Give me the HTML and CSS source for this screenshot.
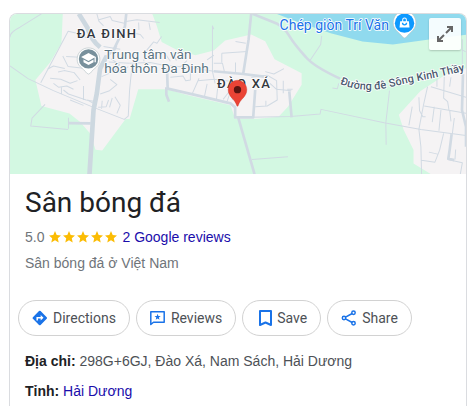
FILE: index.html
```html
<!DOCTYPE html>
<html lang="vi">
<head>
    <meta charset="UTF-8">
    <meta name="viewport" content="width=device-width, initial-scale=1.0">
    <title>Sân bóng đá</title>
    <link rel="stylesheet" href="styles.css">
</head>
<body>
    <main class="card">
        <div class="map">
            <svg class="map-canvas" viewBox="30 42 1365 480" preserveAspectRatio="xMidYMid slice" role="img" aria-label="Map">
                <rect class="land" x="20" y="30" width="1390" height="500"/>
                <!-- built-up areas -->
                <path class="town" d="M188 42H456L470 80L484 126L530 150L585 166L640 152L674 122L752 104L794 124L822 178L903 220V254L862 320L834 350L770 356H704L690 316L560 285L500 268H414L388 357H376L306 451L286 449L270 400L240 366L208 340L124 318L106 240L150 188L184 130Z"/>
                <path class="town" d="M1395 205L1340 220L1258 274L1194 344L1208 388L1238 450V490L1290 522H1395Z"/>
                <path class="water" d="M828 42H1395V105L1290 118L1176 134L1085 125L990 100L890 66Z"/>
                <!-- small roads -->
                <g class="lane">
                    <path d="M124 42L60 82Q30 96 30 112M30 198L84 236L160 272L280 322L372 358L384 348L388 270L396 190"/>
                    <path d="M135 313L96 354L92 378L204 388M205 353V386M122 248L204 94L230 100L262 115M194 206L160 198L142 208M174 216L192 212L222 218L240 240M150 235L182 238L210 250L232 242M198 170L240 172M160 250L176 262L200 258L220 268"/>
                    <path d="M188 168L204 200L250 205M190 270L205 282L258 300L280 304M184 262V282M296 60L330 50L336 62L372 70M290 42L296 64L310 78M372 66L410 60L478 68M415 68L416 90M446 68L450 90M380 96L420 104L430 116M322 150L340 160L350 138M310 140L360 148"/>
                    <path d="M304 230L340 215L358 194L332 176M330 205L360 218L384 200M300 282L328 272L350 254L330 238M294 322L318 320L325 300M306 302L304 326M328 322L336 294M344 290L360 316L350 340M326 186L388 190M250 258V300M262 300L280 310M210 300L250 316"/>
                    <path d="M388 190L450 188L490 196L560 202L640 214M430 184L440 150L460 126L470 130L484 110M470 160L492 158L510 184M510 232L548 228L556 242L570 240V208M528 182L520 160M540 200L560 182M576 280L596 235M612 290L620 252M592 242L640 238L690 244M640 88L636 78V214L644 250M620 180L640 166M648 298L652 260"/>
                    <path d="M640 190H666L672 216M664 160L740 155M664 160V188M705 125L736 130M705 188V218M752 232L800 226L828 242L830 300L800 318L764 320M794 215L820 222L850 206M808 250L828 268L872 272M848 242V280M860 268H876M796 318V302M668 298L690 270M680 304L686 286M690 244L696 300"/>
                    <path d="M704 352L870 349L958 342L961 328L1150 368L1260 388L1395 406M1156 434L1155 368L1166 272M963 108L960 134L928 182M754 478L862 470M995 264L1010 266L1014 250"/>
                    <path d="M1262 522L1260 440L1254 388L1268 314L1280 260M1395 340L1270 318M1300 320L1294 366M1320 330L1314 392M1346 330L1350 364M1360 354L1354 402M1328 400L1316 450L1302 486L1262 480M1284 456L1310 462M1254 292L1256 332L1266 350L1274 350M1234 320L1224 376M1330 230L1328 294L1340 305L1344 330M1350 232L1346 260M1290 260L1395 292M1308 260V238M1340 478L1384 488L1378 522M1364 448L1362 478M1384 118V222M1394 156L1384 150"/>
                </g>
                <!-- main roads -->
                <g class="road">
                    <path class="wide" d="M236 42L262 84Q272 120 300 142M320 168L300 205Q296 232 290 280L280 330Q274 420 268 522"/>
                    <path class="mid" d="M378 42L374 80L342 146L320 170M500 206L502 266L590 286L690 310L704 322V352H758L764 270M713 352L762 522M752 42L744 120L728 222M640 214L728 222L790 230"/>
                    <path class="mid" d="M756 42L830 72Q852 84 866 108T916 172Q940 200 1018 236"/>
                    <path class="mid" d="M866 274L873 352M204 369L272 370M498 262V284L506 305M1386 222L1383 330L1395 380V440M1352 402L1346 450L1342 476L1360 480"/>
                </g>
                <defs>
                    <path id="dike-road" d="M1017 252Q1080 278 1150 266Q1220 248 1290 236Q1350 222 1400 211"/>
                </defs>
                <text class="label road-label"><textPath href="#dike-road">Đường đê Sông Kinh Thầy</textPath></text>
                <text class="label area" x="230" y="115">ĐA ĐINH</text>
                <text class="label area" x="650" y="265">ĐÀO XÁ</text>
                <text class="label place" x="312" y="177">Trung tâm văn</text>
                <text class="label place" x="312" y="219">hóa thôn Đa Đinh</text>
                <text class="label shop" x="837" y="90">Chép giòn Trí Văn</text>
                <!-- school marker -->
                <path class="marker-rim" d="M265 144C284 144 299 159 299 178C299 200 281 204 271 219Q265 226 259 219C249 204 231 200 231 178C231 159 246 144 265 144Z"/>
                <circle fill="#78909c" cx="265" cy="177" r="29"/>
                <path fill="#fff" d="M265 159L243 171L265 183L283 173V187H287V171ZM250 179V187L265 195L280 187V179L265 187Z"/>
                <!-- shop marker -->
                <path class="marker-rim" d="M1211 34C1231 34 1245 50 1245 69C1245 90 1228 96 1217 111Q1211 118 1205 111C1194 96 1177 90 1177 69C1177 50 1191 34 1211 34Z"/>
                <circle fill="#0d99ff" cx="1211" cy="70" r="29"/>
                <path fill="#fff" fill-rule="evenodd" d="M1198 64H1204V60A7 7 0 0 1 1218 60V64H1224L1226 83H1196ZM1207 64H1215V60A4 4 0 0 0 1207 60ZM1203 69A8 8 0 0 0 1219 69H1215A4 4 0 0 1 1207 69Z"/>
                <!-- pin -->
                <path fill="#ea4335" stroke="#c5392d" stroke-width="1" d="M711 241C727 241 739 254 739 269C739 291 719 296 713 317Q711 321 709 317C703 296 683 291 683 269C683 254 695 241 711 241Z"/>
                <circle fill="#5b1410" cx="711" cy="269" r="11"/>
            </svg>
            <button class="expand" type="button" aria-label="Expand map">
                <svg width="18" height="18" viewBox="0 0 18 18" fill="none" stroke="#666" stroke-width="2">
                    <path d="M11 2H16V7M16 2L10 8M2 11V16H7M2 16L8 10"/>
                </svg>
            </button>
        </div>

        <section class="summary">
            <h1 class="title">Sân bóng đá</h1>
            <div class="rating">
                <span>5.0</span>
                <svg class="stars" width="68" height="12" viewBox="0 0 68 12" role="img" aria-label="5 stars">
                    <defs>
                        <path id="star" d="M6 0L7.7 4L12 4.4L8.8 7.3L9.7 11.6L6 9.3L2.3 11.6L3.2 7.3L0 4.4L4.3 4Z"/>
                    </defs>
                    <use href="#star"/>
                    <use href="#star" x="14"/>
                    <use href="#star" x="28"/>
                    <use href="#star" x="42"/>
                    <use href="#star" x="56"/>
                </svg>
                <a href="#reviews">2 Google reviews</a>
            </div>
            <p class="kind">Sân bóng đá ở Việt Nam</p>
        </section>

        <div class="actions">
            <button class="chip" type="button">
                <svg width="16" height="16" viewBox="0 0 16 16">
                    <path fill="#1a73e8" d="M9.6 1.1L15.7 7.2Q16.4 8 15.7 8.8L9.6 14.9Q8.8 15.7 8 14.9L1.900 8.800Q1.200 8 1.900 7.200L8 1.100Q8.800 .4 9.600 1.100Z"/>
                    <path fill="none" stroke="#fff" stroke-width="1.5" d="M6.2 10.500V7.700H10.500"/>
                    <path fill="#fff" d="M9.700 5L12.500 7.700L9.700 10.400Z"/>
                </svg>
                Directions
            </button>
            <button class="chip" type="button">
                <svg width="16" height="16" viewBox="0 0 16 16">
                    <path fill="none" stroke="#1a73e8" stroke-width="1.5" stroke-linejoin="round" d="M1.8 1.8H15.2V12.200H4.500L1.800 14.500Z"/>
                    <path fill="#1a73e8" d="M8.600 3.800L9.400 6L11.700 6.100L9.900 7.500L10.500 9.800L8.600 8.500L6.700 9.800L7.300 7.500L5.500 6.100L7.800 6Z"/>
                </svg>
                Reviews
            </button>
            <button class="chip chip-save" type="button">
                <svg width="18" height="18" viewBox="0 0 18 18" fill="none" stroke="#1a73e8" stroke-width="2">
                    <path stroke-linejoin="round" d="M5 2H16V16L10.500 13.500L5 16Z"/>
                </svg>
                Save
            </button>
            <button class="chip" type="button">
                <svg width="16" height="16" viewBox="0 0 16 16" fill="none" stroke="#1a73e8" stroke-width="1.5">
                    <path d="M12.200 3.500L5.500 7.200M5.500 8.800L12.200 12.500"/>
                    <circle cx="13.500" cy="2.800" r="1.700"/>
                    <circle cx="4" cy="8" r="1.700"/>
                    <circle cx="13.500" cy="13.200" r="1.700"/>
                </svg>
                Share
            </button>
        </div>

        <dl class="facts">
            <div>
                <dt>Địa chỉ:</dt>
                <dd>298G+6GJ, Đào Xá, Nam Sách, Hải Dương</dd>
            </div>
            <div>
                <dt>Tỉnh:</dt>
                <dd><a href="#hai-duong">Hải Dương</a></dd>
            </div>
        </dl>
    </main>
</body>
</html>
```
FILE: styles.css
```css
* {
    box-sizing: border-box;
}
body {
    margin: 0;
    padding: 13px 8px 0 9px;
    background: #fff;
    color: #4d5156;
    font-family: "Liberation Sans", Arial, sans-serif;
    font-size: 14px;
    line-height: 20px;
}
a {
    color: #1a0dab;
    text-decoration: none;
}
a:hover {
    text-decoration: underline;
}
.card {
    min-height: calc(100vh - 13px);
    border: 1px solid #dadce0;
    border-bottom: 0;
    border-radius: 8px 8px 0 0;
    overflow: hidden;
}

/* map */
.map {
    position: relative;
    height: 160px;
}
.map-canvas {
    display: block;
    width: 100%;
    height: 100%;
}
.land {
    fill: #d3f8e2;
}
.town {
    fill: #f5f3f4;
}
.water {
    fill: #90daee;
}
.lane,
.road {
    fill: none;
    stroke: #d1dae3;
    stroke-width: 3;
    stroke-linejoin: round;
}
.road .mid {
    stroke-width: 8;
}
.road .wide {
    stroke: #cdd8e0;
    stroke-width: 14;
}
.label {
    font-family: Roboto, sans-serif;
    paint-order: stroke;
    stroke: #fff;
    stroke-width: 5px;
    stroke-linejoin: round;
}
.area {
    font-size: 39px;
    font-weight: 500;
    letter-spacing: 4px;
    fill: #333840;
}
.place {
    font-size: 41px;
    fill: #5b7482;
}
.shop {
    font-size: 42px;
    fill: #1a73e8;
}
.road-label {
    font-size: 33px;
    font-weight: 500;
    fill: #4c5b70;
}
.marker-rim {
    fill: #fff;
    stroke: #b8c4c8;
    stroke-width: 2;
}
.expand {
    position: absolute;
    top: 4px;
    right: 5px;
    display: flex;
    align-items: center;
    justify-content: center;
    width: 32px;
    height: 32px;
    padding: 0;
    border: 0;
    border-radius: 2px;
    background: rgba(255, 255, 255, 0.9);
    box-shadow: 0 1px 2px rgba(0, 0, 0, 0.2);
}

/* summary */
.summary {
    padding: 11px 15px 0;
}
.title {
    margin: 0;
    color: #202124;
    font-family: "Google Sans", Roboto, sans-serif;
    font-size: 28px;
    font-weight: 400;
    line-height: 36px;
}
.rating {
    display: flex;
    align-items: center;
    gap: 5px;
    margin-top: 6px;
    color: #70757a;
}
.stars {
    fill: #fbbc04;
}
.kind {
    margin: 6px 0 0;
    color: #70757a;
}

/* buttons */
.actions {
    display: flex;
    flex-wrap: wrap;
    gap: 6px;
    padding: 27px 8px 0;
}
.chip {
    display: flex;
    align-items: center;
    gap: 6px;
    height: 36px;
    padding: 0 13px 0 12px;
    border: 1px solid #d2d2d2;
    border-radius: 18px;
    background: #fff;
    color: #4d5156;
    font-family: Roboto, sans-serif;
    font-size: 14px;
}
.chip-save {
    gap: 4px;
}

/* facts */
.facts {
    display: grid;
    gap: 10px;
    margin: 0;
    padding: 15px 15px 0;
}
.facts dt,
.facts dd {
    display: inline;
    margin: 0;
}
.facts dt {
    color: #202124;
    font-weight: bold;
}
```
